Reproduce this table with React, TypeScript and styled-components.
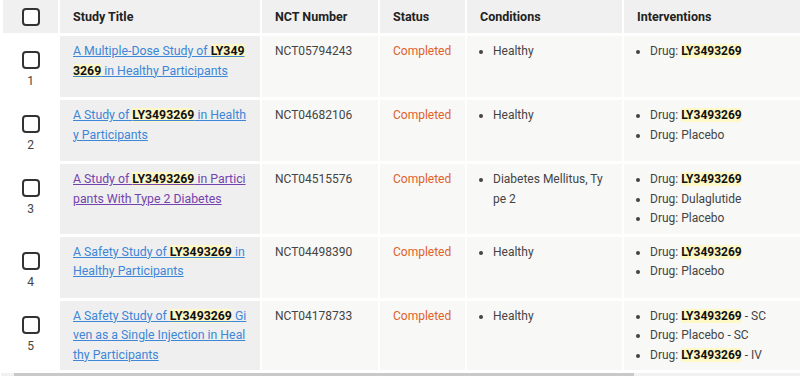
import styled, { createGlobalStyle } from "styled-components";

const GlobalStyle = createGlobalStyle`
  body {
    margin: 0;
    background: #ffffff;
    font-family: Roboto, "Liberation Sans", Arial, sans-serif;
    color: #444;
  }
`;

const Wrapper = styled.div`
  width: 800px;
  overflow: hidden;
  padding-left: 1px;
  box-sizing: border-box;
`;

const Table = styled.table`
  border-collapse: separate;
  border-spacing: 2px 3px;
  margin-top: -3px;
  table-layout: fixed;
  width: 1025px;
  font-size: 12px;
  line-height: 19.5px;
`;

const ScrollTrack = styled.div`
  height: 3px;
  background: #f1f1f1;
  display: flex;
`;

const ScrollThumb = styled.div`
  margin-left: 13px;
  width: 620px;
  background: #c9c9c9;
`;

const HeadCell = styled.th<{ $w: number; $center?: boolean }>`
  width: ${(p) => p.$w}px;
  height: 33px;
  box-sizing: border-box;
  padding: 0 13px;
  background: #f0f0f0;
  color: #222;
  font-size: 12.5px;
  font-weight: 700;
  text-align: ${(p) => (p.$center ? "center" : "left")};
  vertical-align: middle;
`;

const Cell = styled.td<{ $bg?: string }>`
  background: ${(p) => p.$bg || "#f8f8f7"};
  padding: 6px 13px 5px;
  vertical-align: top;
  word-break: break-all;
`;

const SelectCell = styled.td`
  background: #ffffff;
  padding: 15px 0 8px;
  text-align: center;
  vertical-align: top;
`;

const Box = styled.span`
  display: block;
  width: 18px;
  height: 18px;
  margin: 0 auto;
  box-sizing: border-box;
  border: 2px solid #333;
  border-radius: 4px;
  background: #fff;
`;

const RowNum = styled.div`
  margin-top: 4px;
  line-height: 16px;
  font-size: 12px;
  color: #444;
`;

const TitleLink = styled.a<{ $visited?: boolean }>`
  font-size: 12.3px;
  color: ${(p) => (p.$visited ? "#7443ad" : "#3d86d8")};
  text-decoration: underline;
  cursor: pointer;
`;

const Mark = styled.mark`
  background: #fdf8c6;
  color: #111;
  font-weight: 700;
`;

const Status = styled.span`
  color: #e0612a;
`;

const List = styled.ul`
  margin: 0;
  padding-left: 13px;
`;

interface IStudy {
  title: string[];
  nct: string;
  conditions: string[];
  interventions: string[][];
  visited?: boolean;
}

const studies: IStudy[] = [
  {
    title: ["A Multiple-Dose Study of ", "LY3493269", " in Healthy Participants"],
    nct: "NCT05794243",
    conditions: ["Healthy"],
    interventions: [["Drug: ", "LY3493269", ""]],
  },
  {
    title: ["A Study of ", "LY3493269", " in Healthy Participants"],
    nct: "NCT04682106",
    conditions: ["Healthy"],
    interventions: [["Drug: ", "LY3493269", ""], ["Drug: Placebo"]],
  },
  {
    title: ["A Study of ", "LY3493269", " in Participants With Type 2 Diabetes"],
    nct: "NCT04515576",
    conditions: ["Diabetes Mellitus, Type 2"],
    interventions: [["Drug: ", "LY3493269", ""], ["Drug: Dulaglutide"], ["Drug: Placebo"]],
    visited: true,
  },
  {
    title: ["A Safety Study of ", "LY3493269", " in Healthy Participants"],
    nct: "NCT04498390",
    conditions: ["Healthy"],
    interventions: [["Drug: ", "LY3493269", ""], ["Drug: Placebo"]],
  },
  {
    title: ["A Safety Study of ", "LY3493269", " Given as a Single Injection in Healthy Participants"],
    nct: "NCT04178733",
    conditions: ["Healthy"],
    interventions: [["Drug: ", "LY3493269", " - SC"], ["Drug: Placebo - SC"], ["Drug: ", "LY3493269", " - IV"]],
  },
];

function Highlighted({ parts }: { parts: string[] }) {
  return (
    <>
      {parts.map((p, i) => (i === 1 ? <Mark key={i}>{p}</Mark> : <span key={i}>{p}</span>))}
    </>
  );
}

function App() {
  return (
    <Wrapper>
      <GlobalStyle />
      <Table>
        <thead>
          <tr>
            <HeadCell $w={55} $center>
              <Box />
            </HeadCell>
            <HeadCell $w={200}>Study Title</HeadCell>
            <HeadCell $w={116}>NCT Number</HeadCell>
            <HeadCell $w={85}>Status</HeadCell>
            <HeadCell $w={155}>Conditions</HeadCell>
            <HeadCell $w={400}>Interventions</HeadCell>
          </tr>
        </thead>
        <tbody>
          {studies.map((s, i) => (
            <tr key={s.nct}>
              <SelectCell>
                <Box />
                <RowNum>{i + 1}</RowNum>
              </SelectCell>
              <Cell $bg="#efefef">
                <TitleLink $visited={s.visited}>
                  <Highlighted parts={s.title} />
                </TitleLink>
              </Cell>
              <Cell>{s.nct}</Cell>
              <Cell>
                <Status>Completed</Status>
              </Cell>
              <Cell>
                <List>
                  {s.conditions.map((c) => (
                    <li key={c}>{c}</li>
                  ))}
                </List>
              </Cell>
              <Cell>
                <List>
                  {s.interventions.map((iv, j) => (
                    <li key={j}>
                      <Highlighted parts={iv} />
                    </li>
                  ))}
                </List>
              </Cell>
            </tr>
          ))}
        </tbody>
      </Table>
      <ScrollTrack>
        <ScrollThumb />
      </ScrollTrack>
    </Wrapper>
  );
}

export default App;
